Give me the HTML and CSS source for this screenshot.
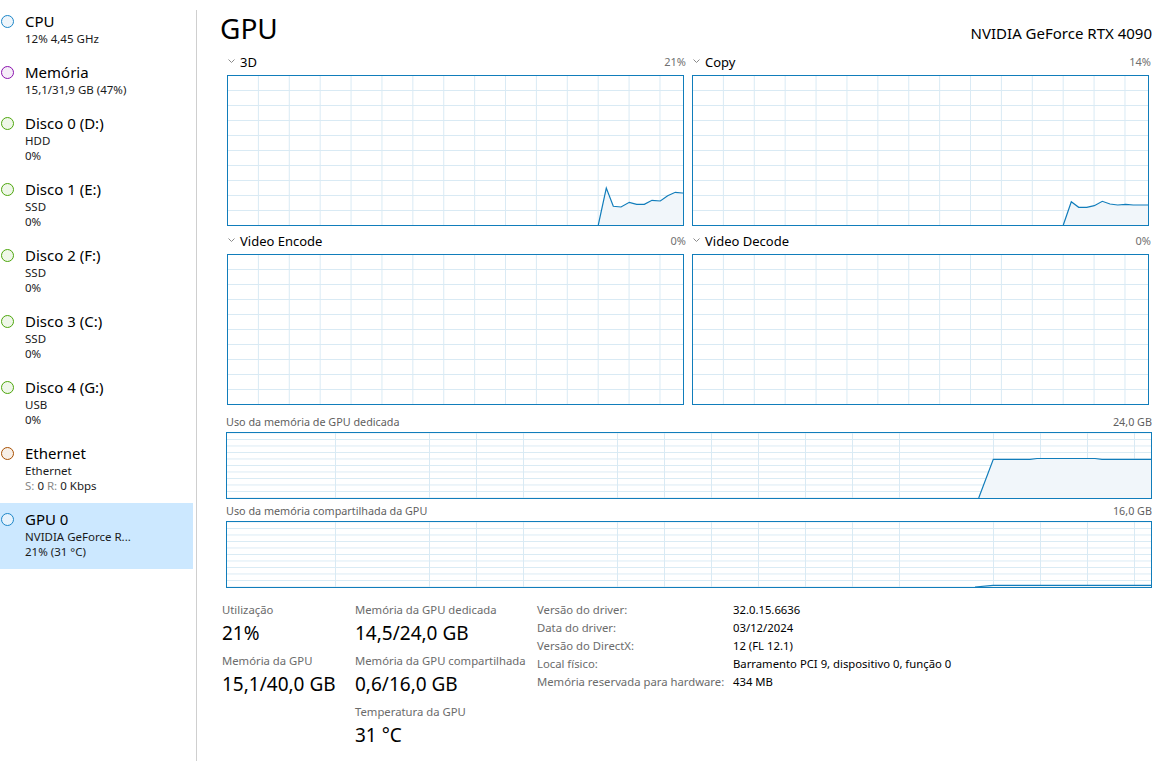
FILE: index.html
```html
<!DOCTYPE html>
<html lang="pt-BR">
<head>
    <meta charset="UTF-8">
    <title>Gerenciador de Tarefas - Desempenho</title>
    <link rel="stylesheet" href="styles.css">
</head>
<body>
    <div class="app">
        <ul class="side">
            <li class="item">
                <i class="dot cpu"></i>
                <div class="info">
                    <div class="name">CPU</div>
                    <div class="sub">12% 4,45 GHz</div>
                </div>
            </li>
            <li class="item">
                <i class="dot mem"></i>
                <div class="info">
                    <div class="name">Memória</div>
                    <div class="sub">15,1/31,9 GB (47%)</div>
                </div>
            </li>
            <li class="item">
                <i class="dot disk"></i>
                <div class="info">
                    <div class="name">Disco 0 (D:)</div>
                    <div class="sub">HDD</div>
                    <div class="sub">0%</div>
                </div>
            </li>
            <li class="item">
                <i class="dot disk"></i>
                <div class="info">
                    <div class="name">Disco 1 (E:)</div>
                    <div class="sub">SSD</div>
                    <div class="sub">0%</div>
                </div>
            </li>
            <li class="item">
                <i class="dot disk"></i>
                <div class="info">
                    <div class="name">Disco 2 (F:)</div>
                    <div class="sub">SSD</div>
                    <div class="sub">0%</div>
                </div>
            </li>
            <li class="item">
                <i class="dot disk"></i>
                <div class="info">
                    <div class="name">Disco 3 (C:)</div>
                    <div class="sub">SSD</div>
                    <div class="sub">0%</div>
                </div>
            </li>
            <li class="item">
                <i class="dot disk"></i>
                <div class="info">
                    <div class="name">Disco 4 (G:)</div>
                    <div class="sub">USB</div>
                    <div class="sub">0%</div>
                </div>
            </li>
            <li class="item">
                <i class="dot net"></i>
                <div class="info">
                    <div class="name">Ethernet</div>
                    <div class="sub">Ethernet</div>
                    <div class="sub"><span class="dim">S:</span> 0 <span class="dim">R:</span> 0 Kbps</div>
                </div>
            </li>
            <li class="item active">
                <i class="dot cpu"></i>
                <div class="info">
                    <div class="name">GPU 0</div>
                    <div class="sub">NVIDIA GeForce R...</div>
                    <div class="sub">21% (31 °C)</div>
                </div>
            </li>
        </ul>
        <div class="divider"></div>

        <div class="main">
            <div class="head">
                <h1>GPU</h1>
                <span class="model">NVIDIA GeForce RTX 4090</span>
            </div>

            <div class="engines">
                <div class="engine">
                    <div class="label">
                        <span><svg class="chev" width="7" height="5" viewBox="0 0 7 5"><polyline points="0.5,0.5 3.5,3.5 6.5,0.5"/></svg>3D</span>
                        <span class="pct">21%</span>
                    </div>
                    <div class="chart">
                        <svg viewBox="0 0 455 149" preserveAspectRatio="none">
                            <polygon class="area" points="370.3,149 378.3,112 385.3,130.3 393,131 401.3,126.3 408.7,128.3 416.3,128.3 424,124.3 432.3,125 439.7,119.7 447.3,116.3 454.3,117 455,117 455,149"/>
                            <polyline class="line" points="370.3,149 378.3,112 385.3,130.3 393,131 401.3,126.3 408.7,128.3 416.3,128.3 424,124.3 432.3,125 439.7,119.7 447.3,116.3 454.3,117 455,117"/>
                        </svg>
                    </div>
                </div>
                <div class="engine">
                    <div class="label">
                        <span><svg class="chev" width="7" height="5" viewBox="0 0 7 5"><polyline points="0.5,0.5 3.5,3.5 6.5,0.5"/></svg>Copy</span>
                        <span class="pct">14%</span>
                    </div>
                    <div class="chart">
                        <svg viewBox="0 0 455 149" preserveAspectRatio="none">
                            <polygon class="area" points="370.3,149 378.3,125.7 385.7,131.3 393.7,131.3 401.3,129.7 409.3,125.3 417,128 424.7,129 432.7,128.3 440.3,129 455,129 455,149"/>
                            <polyline class="line" points="370.3,149 378.3,125.7 385.7,131.3 393.7,131.3 401.3,129.7 409.3,125.3 417,128 424.7,129 432.7,128.3 440.3,129 455,129"/>
                        </svg>
                    </div>
                </div>
                <div class="engine">
                    <div class="label">
                        <span><svg class="chev" width="7" height="5" viewBox="0 0 7 5"><polyline points="0.5,0.5 3.5,3.5 6.5,0.5"/></svg>Video Encode</span>
                        <span class="pct">0%</span>
                    </div>
                    <div class="chart"></div>
                </div>
                <div class="engine">
                    <div class="label">
                        <span><svg class="chev" width="7" height="5" viewBox="0 0 7 5"><polyline points="0.5,0.5 3.5,3.5 6.5,0.5"/></svg>Video Decode</span>
                        <span class="pct">0%</span>
                    </div>
                    <div class="chart"></div>
                </div>
            </div>

            <div class="memgraph first">
                <div class="label small">
                    <span>Uso da memória de GPU dedicada</span>
                    <span>24,0 GB</span>
                </div>
                <div class="chart wide">
                    <svg viewBox="0 0 924 65" preserveAspectRatio="none">
                        <polygon class="area" points="751.7,65 766.3,26.3 803,26.3 810,25.5 868,25.5 875,26.3 924,26.3 924,65"/>
                        <polyline class="line" points="751.7,65 766.3,26.3 803,26.3 810,25.5 868,25.5 875,26.3 924,26.3"/>
                    </svg>
                </div>
            </div>
            <div class="memgraph">
                <div class="label small">
                    <span>Uso da memória compartilhada da GPU</span>
                    <span>16,0 GB</span>
                </div>
                <div class="chart wide">
                    <svg viewBox="0 0 924 65" preserveAspectRatio="none">
                        <polygon class="area" points="748,65 766,63.3 924,63.3 924,65"/>
                        <polyline class="line" points="748,65 766,63.3 924,63.3"/>
                    </svg>
                </div>
            </div>

            <div class="stats">
                <div class="col c1">
                    <div class="stat">
                        <div class="k">Utilização</div>
                        <div class="v">21%</div>
                    </div>
                    <div class="stat">
                        <div class="k">Memória da GPU</div>
                        <div class="v">15,1/40,0 GB</div>
                    </div>
                </div>
                <div class="col c2">
                    <div class="stat">
                        <div class="k">Memória da GPU dedicada</div>
                        <div class="v">14,5/24,0 GB</div>
                    </div>
                    <div class="stat">
                        <div class="k">Memória da GPU compartilhada</div>
                        <div class="v">0,6/16,0 GB</div>
                    </div>
                    <div class="stat">
                        <div class="k">Temperatura da GPU</div>
                        <div class="v">31 °C</div>
                    </div>
                </div>
                <table class="props">
                    <tr><td>Versão do driver:</td><td>32.0.15.6636</td></tr>
                    <tr><td>Data do driver:</td><td>03/12/2024</td></tr>
                    <tr><td>Versão do DirectX:</td><td>12 (FL 12.1)</td></tr>
                    <tr><td>Local físico:</td><td>Barramento PCI 9, dispositivo 0, função 0</td></tr>
                    <tr><td>Memória reservada para hardware:</td><td>434 MB</td></tr>
                </table>
            </div>
        </div>
    </div>
</body>
</html>
```

FILE: styles.css
```css
*{margin:0;padding:0;box-sizing:border-box;}
body{
    font-family:"Noto Sans",sans-serif;
    color:#000;
    background:#fff;
}
.app{
    display:flex;
    height:761px;
    overflow:hidden;
}

/* left list */
.side{
    list-style:none;
    width:193px;
    padding-top:5px;
    flex-shrink:0;
}
.item{
    display:flex;
    align-items:flex-start;
    padding:7px 0 11px 1px;
}
.item.active{
    background-color:#cce8ff;
}
.dot{
    width:13px;
    height:13px;
    border-radius:50%;
    border:1px solid #1c86c8;
    background:#eef5fb;
    margin:3px 11px 0 0;
    flex-shrink:0;
}
.dot.mem{border-color:#8b12ae;background:#f5edf8;}
.dot.disk{border-color:#4da60c;background:#eff7e9;}
.dot.net{border-color:#a74f01;background:#f7efe7;}
.item.active .dot{background:#e6f2fc;}
.name{
    font-size:15px;
    line-height:18px;
}
.sub{
    font-size:11.5px;
    line-height:15px;
    color:#1a1a1a;
    padding-top:1px;
    margin-bottom:-1px;
}
.sub .dim{color:#888;}
.divider{
    width:1px;
    background:#cfcfcf;
    margin:10px 0 0 3px;
    flex-shrink:0;
}

/* right panel */
.main{
    flex:1;
    padding:0 4px 0 29px;
}
.head{
    display:flex;
    justify-content:space-between;
    align-items:baseline;
    padding-top:9px;
    margin-bottom:7px;
}
.head h1{
    font-size:28px;
    font-weight:normal;
    line-height:38px;
    margin-left:-6px;
}
.model{
    font-size:15px;
}
.engines{
    display:grid;
    grid-template-columns:1fr 1fr;
    column-gap:8px;
    row-gap:7px;
    padding:0 3px 0 1px;
}
.label{
    display:flex;
    justify-content:space-between;
    font-size:13px;
    line-height:16px;
    margin-bottom:5px;
}
.label .pct{
    font-size:11px;
    color:#707070;
    margin-right:-2px;
}
.chev{
    fill:none;
    stroke:#8a8a8a;
    stroke-width:1;
    margin:0 5px 3px 1px;
}
.chart{
    height:151px;
    border:1px solid #117dbb;
    background-image:linear-gradient(to right,#d9eaf4 1px,transparent 1px),linear-gradient(to bottom,#d9eaf4 1px,transparent 1px);
    background-size:30.9px 15px;
    background-position:-1px -1px;
}
.chart svg{
    display:block;
    width:100%;
    height:100%;
}
.area{fill:#f1f6fa;}
.line{fill:none;stroke:#117dbb;stroke-width:1.2;}
.memgraph{margin-top:5px;}
.memgraph.first{margin-top:10px;}
.label.small{
    font-size:10.8px;
    line-height:14px;
    color:#5f5f5f;
    margin-bottom:3px;
}
.chart.wide{
    height:67px;
    background-size:47px 6.5px;
    background-position:14px -0.5px;
}

/* numbers under the charts */
.stats{
    display:flex;
    align-items:flex-start;
    margin:14px 0 0 -4px;
}
.col{display:flex;flex-direction:column;gap:5px;}
.c1{width:133px;}
.c2{width:182px;}
.k{
    font-size:11.3px;
    line-height:16px;
    color:#6b6b6b;
}
.v{
    font-size:19px;
    line-height:28px;
    padding-top:1px;
    margin-bottom:1px;
}
.props{
    border-collapse:collapse;
    font-size:11.3px;
    margin-top:-1px;
}
.props td{
    height:18px;
    line-height:18px;
    padding:0;
    white-space:nowrap;
}
.props td:first-child{
    width:196px;
    color:#6b6b6b;
}
```
